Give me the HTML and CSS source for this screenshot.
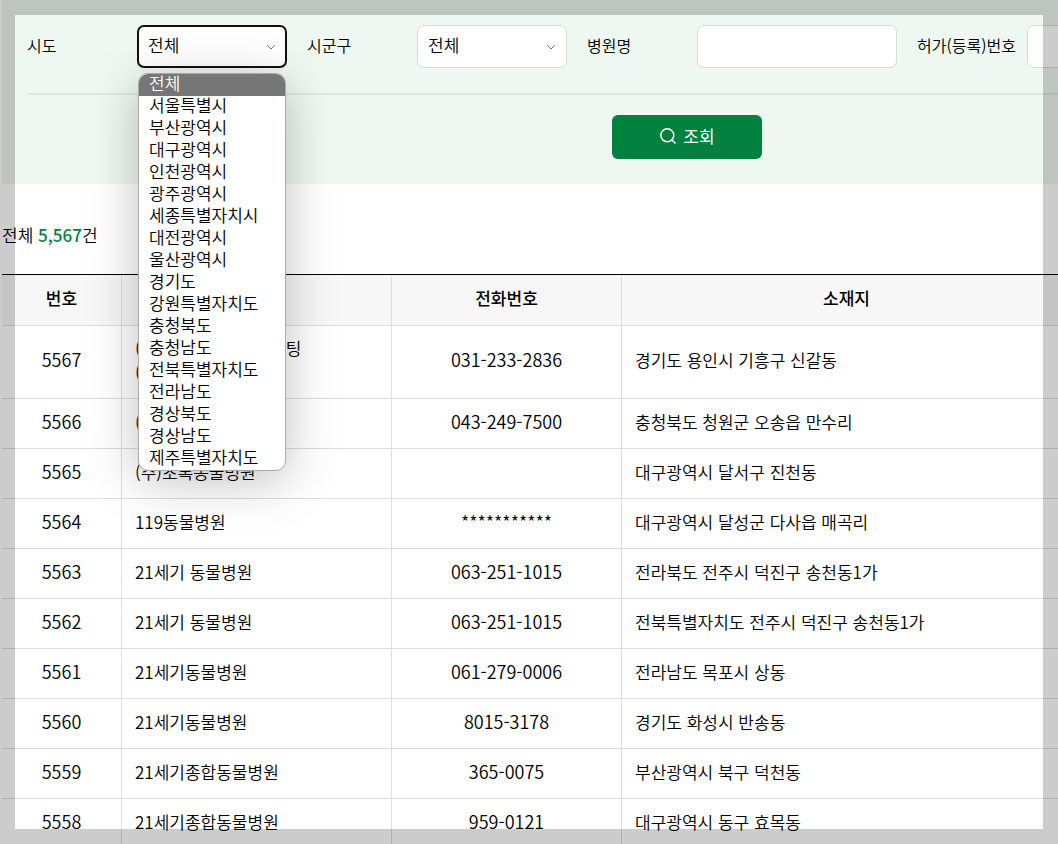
FILE: index.html
```html
<!DOCTYPE html>
<html lang="ko">
<head>
    <meta charset="UTF-8">
    <meta name="viewport" content="width=device-width, initial-scale=1.0">
    <title>동물병원 조회</title>
    <link rel="stylesheet" href="styles.css">
</head>
<body>
    <main class="page">
        <form class="search">
            <div class="fields">
                <label class="label" for="sido">시도</label>
                <div class="select-box">
                    <select class="control open" id="sido">
                        <option>전체</option>
                    </select>
                    <svg class="chevron" width="10" height="6" viewBox="0 0 10 6" fill="none" stroke="#777"><path d="M1 1l4 4 4-4"/></svg>
                    <ul class="options" role="listbox" aria-label="시도">
                        <li class="selected" role="option" aria-selected="true">전체</li>
                        <li role="option">서울특별시</li>
                        <li role="option">부산광역시</li>
                        <li role="option">대구광역시</li>
                        <li role="option">인천광역시</li>
                        <li role="option">광주광역시</li>
                        <li role="option">세종특별자치시</li>
                        <li role="option">대전광역시</li>
                        <li role="option">울산광역시</li>
                        <li role="option">경기도</li>
                        <li role="option">강원특별자치도</li>
                        <li role="option">충청북도</li>
                        <li role="option">충청남도</li>
                        <li role="option">전북특별자치도</li>
                        <li role="option">전라남도</li>
                        <li role="option">경상북도</li>
                        <li role="option">경상남도</li>
                        <li role="option">제주특별자치도</li>
                    </ul>
                </div>
                <label class="label" for="sigungu">시군구</label>
                <div class="select-box">
                    <select class="control" id="sigungu">
                        <option>전체</option>
                    </select>
                    <svg class="chevron" width="10" height="6" viewBox="0 0 10 6" fill="none" stroke="#777"><path d="M1 1l4 4 4-4"/></svg>
                </div>
                <label class="label" for="hospital">병원명</label>
                <input class="control text" type="text" id="hospital">
                <label class="label" for="license">허가(등록)번호</label>
                <input class="control text" type="text" id="license">
            </div>
            <div class="actions">
                <button class="submit" type="button">
                    <svg width="18" height="18" viewBox="0 0 18 18" fill="none" stroke="#fff" stroke-width="1.5"><circle cx="8.3" cy="8.3" r="6.5"/><path d="M12.8 12.8l3.7 3.7"/></svg>
                    조회
                </button>
            </div>
        </form>

        <p class="total">전체 <strong>5,567</strong>건</p>

        <table class="list">
            <colgroup>
                <col class="col-no">
                <col class="col-name">
                <col class="col-tel">
                <col class="col-addr">
                <col>
            </colgroup>
            <thead>
                <tr><th>번호</th><th>병원명</th><th>전화번호</th><th>소재지</th><th></th></tr>
            </thead>
            <tbody>
                <tr><td class="num">5567</td><td>(주)동물 의료 및 컨설팅<br>(동물병원)</td><td class="num">031-233-2836</td><td>경기도 용인시 기흥구 신갈동</td><td></td></tr>
                <tr><td class="num">5566</td><td>(주)동물병원</td><td class="num">043-249-7500</td><td>충청북도 청원군 오송읍 만수리</td><td></td></tr>
                <tr><td class="num">5565</td><td>(주)초록동물병원</td><td class="num"></td><td>대구광역시 달서구 진천동</td><td></td></tr>
                <tr><td class="num">5564</td><td>119동물병원</td><td class="num">***********</td><td>대구광역시 달성군 다사읍 매곡리</td><td></td></tr>
                <tr><td class="num">5563</td><td>21세기 동물병원</td><td class="num">063-251-1015</td><td>전라북도 전주시 덕진구 송천동1가</td><td></td></tr>
                <tr><td class="num">5562</td><td>21세기 동물병원</td><td class="num">063-251-1015</td><td>전북특별자치도 전주시 덕진구 송천동1가</td><td></td></tr>
                <tr><td class="num">5561</td><td>21세기동물병원</td><td class="num">061-279-0006</td><td>전라남도 목포시 상동</td><td></td></tr>
                <tr><td class="num">5560</td><td>21세기동물병원</td><td class="num">8015-3178</td><td>경기도 화성시 반송동</td><td></td></tr>
                <tr><td class="num">5559</td><td>21세기종합동물병원</td><td class="num">365-0075</td><td>부산광역시 북구 덕천동</td><td></td></tr>
                <tr><td class="num">5558</td><td>21세기종합동물병원</td><td class="num">959-0121</td><td>대구광역시 동구 효목동</td><td></td></tr>
            </tbody>
        </table>
    </main>
    <div class="frame"></div>
</body>
</html>
```

FILE: styles.css
```css
* {
    box-sizing: border-box;
}
body {
    margin: 0;
    background: #fff;
    color: #000;
    font-family: "Noto Sans CJK KR", sans-serif;
    font-size: 17px;
    font-weight: 350;
    line-height: 24px;
}
.page {
    height: 100vh;
    padding-left: 2px;
    overflow: hidden;
}

/* search form */
.search {
    min-width: 1370px;
    padding: 25px;
    background: #eef7f2;
}
.fields {
    display: flex;
    align-items: center;
    padding-bottom: 25px;
    border-bottom: 2px solid #d7ebe1;
}
.label {
    flex: 0 0 110px;
    padding-bottom: 4px;
    font-size: 16px;
}
.select-box {
    position: relative;
    flex: 0 0 150px;
    margin-right: 20px;
}
.control {
    display: block;
    width: 100%;
    height: 43px;
    padding: 0 10px 4px;
    border: 1px solid #d9d9d9;
    border-radius: 7px;
    outline: none;
    background: #fff;
    color: #000;
    font: inherit;
    appearance: none;
}
.control.text {
    flex: 0 0 200px;
    margin-right: 20px;
}
.control.open {
    padding: 0 9px 4px;
    border: 2px solid #101010;
}
.chevron {
    position: absolute;
    top: 19px;
    right: 11px;
}
.options {
    position: absolute;
    z-index: 2;
    top: 48px;
    left: 1px;
    width: 148px;
    margin: 0;
    padding: 0;
    overflow: hidden;
    border: 1px solid #aaa;
    border-radius: 10px;
    background: #fff;
    box-shadow: 0 10px 50px rgba(0, 0, 0, 0.25);
    list-style: none;
}
.options li {
    height: 22px;
    padding-left: 10px;
    line-height: 18px;
}
.options .selected {
    background: #767676;
    color: #fff;
}
.actions {
    display: flex;
    justify-content: center;
    padding-top: 20px;
}
.submit {
    display: flex;
    align-items: center;
    justify-content: center;
    gap: 6px;
    width: 150px;
    height: 44px;
    padding: 0 0 3px;
    border: 0;
    border-radius: 6px;
    background: #00823e;
    color: #fff;
    font: inherit;
    font-weight: 400;
}

/* result list */
.total {
    margin: 0;
    padding: 39px 0 27px;
}
.total strong {
    color: #00823e;
    font-weight: 500;
}
.list {
    width: 1370px;
    border-collapse: separate;
    border-spacing: 0;
    border-top: 1px solid #000;
    table-layout: fixed;
}
.col-no {
    width: 120px;
}
.col-name {
    width: 270px;
}
.col-tel {
    width: 230px;
}
.col-addr {
    width: 450px;
}
.list th,
.list td {
    height: 50px;
    padding: 10px 13px 14px;
    border-right: 1px solid #ddd;
    border-bottom: 1px solid #ddd;
    text-align: left;
}
.list th {
    height: 51px;
    background: #f7f7f7;
    font-weight: 500;
    text-align: center;
}
.list .num {
    padding: 9px 13px 15px;
    font-size: 18px;
    text-align: center;
}

/* dimmed edge round the window */
.frame {
    position: fixed;
    z-index: 10;
    inset: 0;
    border: 15px solid rgba(0, 0, 0, 0.2);
    pointer-events: none;
}
```
